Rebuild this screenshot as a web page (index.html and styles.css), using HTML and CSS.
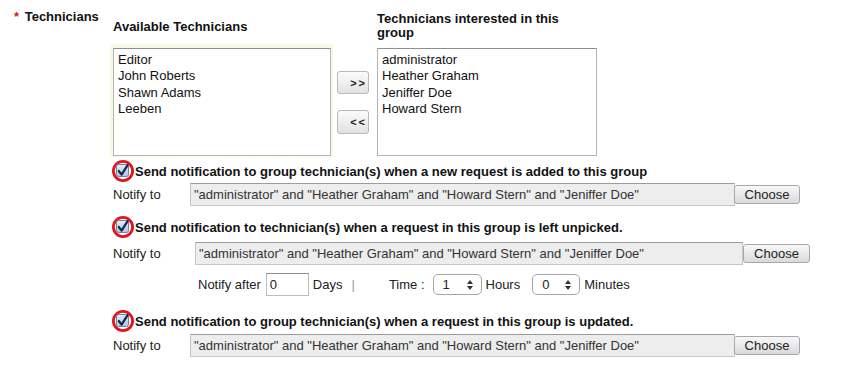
FILE: index.html
```html
<!DOCTYPE html>
<html lang="en">

<head>
    <meta charset="UTF-8">
    <meta name="viewport" content="width=device-width, initial-scale=1.0">
    <title>Group Technicians</title>
    <link rel="stylesheet" href="styles.css">
</head>

<body>
    <div class="field">
        <div class="field-label"><span class="req">*</span> Technicians</div>

        <div class="field-body">
            <div class="picker">
                <div class="pick-title left">Available Technicians</div>
                <div class="pick-title right">Technicians interested in this group</div>

                <div class="list-wrap">
                    <div class="list">
                        <div>Editor</div>
                        <div>John Roberts</div>
                        <div>Shawn Adams</div>
                        <div>Leeben</div>
                    </div>
                </div>
                <div class="move-btns">
                    <button class="move">&gt;&gt;</button>
                    <button class="move">&lt;&lt;</button>
                </div>
                <div class="list right-list">
                    <div>administrator</div>
                    <div>Heather Graham</div>
                    <div>Jeniffer Doe</div>
                    <div>Howard Stern</div>
                </div>
            </div>

            <div class="block first">
                <div class="check-row">
                    <svg class="check" width="22" height="22" viewBox="0 0 22 22">
                        <defs>
                            <linearGradient id="cbg" x1="0" y1="0" x2="0" y2="1">
                                <stop offset="0" stop-color="#e4eef9" />
                                <stop offset="1" stop-color="#a9c6e6" />
                            </linearGradient>
                        </defs>
                        <circle cx="11" cy="11" r="9.6" fill="none" stroke="#e3141c" stroke-width="2.8" />
                        <rect x="4.5" y="4.5" width="12" height="12" rx="2" fill="url(#cbg)" stroke="#6b84a3" />
                        <path d="M6.8 11 L9.6 14.6 L15.6 5.2" fill="none" stroke="#152544" stroke-width="2.2" stroke-linecap="round" stroke-linejoin="round" />
                    </svg>
                    <span>Send notification to group technician(s) when a new request is added to this group</span>
                </div>
                <div class="to-row">
                    <span class="to-label">Notify to</span>
                    <div class="to-input">"administrator" and "Heather Graham" and "Howard Stern" and "Jeniffer Doe"</div>
                    <button class="choose">Choose</button>
                </div>
            </div>

            <div class="block second">
                <div class="check-row">
                    <svg class="check" width="22" height="22" viewBox="0 0 22 22">
                        <circle cx="11" cy="11" r="9.6" fill="none" stroke="#e3141c" stroke-width="2.8" />
                        <rect x="4.5" y="4.5" width="12" height="12" rx="2" fill="url(#cbg)" stroke="#6b84a3" />
                        <path d="M6.8 11 L9.6 14.6 L15.6 5.2" fill="none" stroke="#152544" stroke-width="2.2" stroke-linecap="round" stroke-linejoin="round" />
                    </svg>
                    <span>Send notification to technician(s) when a request in this group is left unpicked.</span>
                </div>
                <div class="to-row wide">
                    <span class="to-label">Notify to</span>
                    <div class="to-input">"administrator" and "Heather Graham" and "Howard Stern" and "Jeniffer Doe"</div>
                    <button class="choose">Choose</button>
                </div>
                <div class="after-row">
                    <span>Notify after</span>
                    <div class="days-input">0</div>
                    <span class="days">Days</span>
                    <span class="sep">|</span>
                    <span class="time">Time :</span>
                    <div class="sel hours-sel">
                        <span>1</span>
                        <svg width="6" height="10" viewBox="0 0 6 10"><path d="M0 4 L3 0 L6 4 Z M0 6 L3 10 L6 6 Z" fill="#333" /></svg>
                    </div>
                    <span class="unit">Hours</span>
                    <div class="sel mins-sel">
                        <span>0</span>
                        <svg width="6" height="10" viewBox="0 0 6 10"><path d="M0 4 L3 0 L6 4 Z M0 6 L3 10 L6 6 Z" fill="#333" /></svg>
                    </div>
                    <span class="unit">Minutes</span>
                </div>
            </div>

            <div class="block third">
                <div class="check-row">
                    <svg class="check" width="22" height="22" viewBox="0 0 22 22">
                        <circle cx="11" cy="11" r="9.6" fill="none" stroke="#e3141c" stroke-width="2.8" />
                        <rect x="4.5" y="4.5" width="12" height="12" rx="2" fill="url(#cbg)" stroke="#6b84a3" />
                        <path d="M6.8 11 L9.6 14.6 L15.6 5.2" fill="none" stroke="#152544" stroke-width="2.2" stroke-linecap="round" stroke-linejoin="round" />
                    </svg>
                    <span>Send notification to group technician(s) when a request in this group is updated.</span>
                </div>
                <div class="to-row">
                    <span class="to-label">Notify to</span>
                    <div class="to-input">"administrator" and "Heather Graham" and "Howard Stern" and "Jeniffer Doe"</div>
                    <button class="choose">Choose</button>
                </div>
            </div>
        </div>
    </div>
</body>

</html>
```

FILE: styles.css
```css
body {
    margin: 0;
    background-color: #fff;
    font-family: "Liberation Sans", Arial, sans-serif;
    font-size: 13px;
    color: #111;
}

.field {
    display: flex;
    padding-top: 9px;
}

.field-label {
    width: 96px;
    padding-left: 14px;
    font-weight: bold;
    line-height: 16px;
}

.req {
    color: #e3141c;
    margin-right: 2px;
}

/* technician picker */

.picker {
    display: grid;
    grid-template-columns: 227px 40px 220px;
    grid-template-rows: 34px auto;
    margin-top: 1px;
}

.pick-title {
    font-weight: bold;
    align-self: center;
}

.pick-title.left {
    line-height: 16px;
    padding-left: 3px;
}

.pick-title.right {
    line-height: 14px;
    max-width: 200px;
    margin-bottom: 2px;
    grid-column: 3;
}

.list-wrap {
    width: 223px;
    box-sizing: border-box;
    padding: 4px 2px 1px 3px;
    background-color: #f8f8e3;
}

.list {
    height: 108px;
    box-sizing: border-box;
    padding: 3px 4px;
    background-color: #fff;
    border: 1px solid #b4b4b4;
    border-top-color: #8e8e8e;
    line-height: 16.4px;
    color: #111;
}

.right-list {
    width: 220px;
    margin-top: 4px;
}

.move-btns {
    display: flex;
    flex-direction: column;
    gap: 16px;
    align-self: center;
    margin-top: 4px;
}

button.move {
    width: 32px;
    height: 23px;
    padding: 0 1px 0 0;
    text-align: right;
    font-family: "Liberation Sans", Arial, sans-serif;
    font-size: 11px;
    font-weight: bold;
    letter-spacing: 2px;
    color: #222;
    background: linear-gradient(#fbfbfb, #e2e2e2);
    border: 1px solid #b8b8b8;
    border-radius: 3px;
}

button.move + button.move {
    height: 24px;
}

/* notification blocks */

.block.first {
    margin-top: 3px;
}

.block.second {
    margin-top: 10px;
}

.block.third {
    margin-top: 14px;
}

.check-row {
    display: flex;
    align-items: center;
    height: 22px;
    font-weight: bold;
    color: #111;
}

.check {
    margin-left: 2px;
    margin-right: 1px;
    flex: none;
}

.to-row {
    display: flex;
    align-items: center;
    padding-left: 3px;
    margin-top: 1px;
}

.second .to-row {
    margin-top: 4px;
}

.third .to-row {
    margin-top: 2px;
}

.to-label {
    width: 77px;
    color: #222;
}

.to-row.wide .to-label {
    width: 82px;
}

.to-input {
    width: 545px;
    height: 23px;
    box-sizing: border-box;
    padding: 0 3px;
    line-height: 21px;
    background-color: #ededed;
    border: 1px solid #c6c6c6;
    border-top-color: #9c9c9c;
    color: #333;
    white-space: nowrap;
}

.to-row.wide .to-input {
    width: 548px;
}

button.choose {
    width: 66px;
    height: 19px;
    margin-left: -1px;
    padding: 0;
    font-family: "Liberation Sans", Arial, sans-serif;
    font-size: 13px;
    color: #222;
    background: linear-gradient(#f8f8f8, #dadada);
    border: 1px solid #a8a8a8;
    border-radius: 3px;
}

.to-row.wide button.choose {
    width: 67px;
    margin-left: 0;
}

.after-row {
    display: flex;
    align-items: center;
    padding-left: 88px;
    margin-top: 8px;
    color: #222;
}

.days-input {
    width: 43px;
    height: 23px;
    box-sizing: border-box;
    margin-left: 5px;
    padding-left: 3px;
    line-height: 21px;
    background-color: #fff;
    border: 1px solid #bcbcbc;
    border-top-color: #8c8c8c;
}

.days {
    margin-left: 4px;
}

.sep {
    margin-left: 9px;
    color: #999;
}

.time {
    margin-left: 34px;
}

.sel {
    height: 21px;
    box-sizing: border-box;
    display: flex;
    align-items: center;
    justify-content: space-between;
    padding: 0 8px 0 9px;
    margin-left: 8px;
    background-color: #fff;
    border: 1px solid #a6a6a6;
    border-radius: 5px;
}

.hours-sel {
    width: 49px;
}

.mins-sel {
    width: 48px;
    margin-left: 12px;
}

.unit {
    margin-left: 4px;
}
```
